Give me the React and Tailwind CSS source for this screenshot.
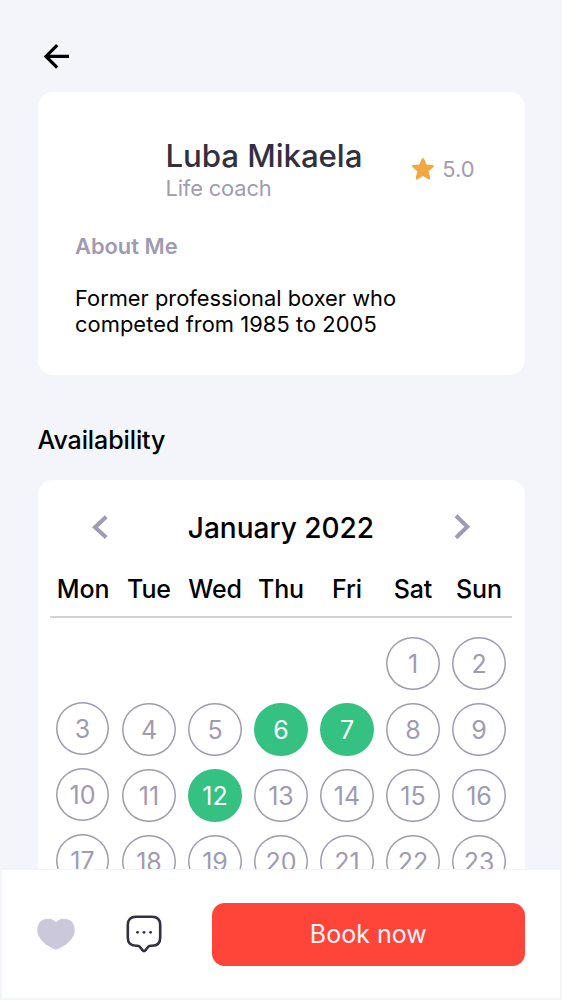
import React from 'react';

const DAYS = ['Mon', 'Tue', 'Wed', 'Thu', 'Fri', 'Sat', 'Sun'];
const LEADING_BLANKS = [0, 1, 2, 3, 4];
const DATES = Array.from({ length: 21 + 2 }, (_, i) => i + 1);
const AVAILABLE = [6, 7, 12];

function DateCell({ date }) {
  const open = AVAILABLE.includes(date);
  const monday = date % 7 === 3;
  return (
    <button
      className={
        'flex items-center justify-center rounded-full pt-[1.5px] text-[25px] leading-none ' +
        (monday ? '-ml-px h-[53px] w-[53px] ' : 'mt-[0.5px] h-[53.5px] w-[53.5px] ') +
        (open ? 'bg-[#34c181] text-white' : 'text-[#9f9bb0] shadow-[inset_0_0_0_1.5px_#9f9bb0]')
      }
    >
      {date}
    </button>
  );
}

function ProfileCard() {
  return (
    <section className="mx-[37.5px] mt-[22px] h-[283px] rounded-[15px] bg-white px-[37.5px] pt-[45px]">
      <div className="flex h-[64px] justify-between pl-[90.5px] pr-[12.5px]">
        <div className="whitespace-nowrap">
          <h1 className="text-[31.25px] font-medium leading-[38px] tracking-[-0.08px] text-[#32303f]">Luba Mikaela</h1>
          <p className="text-[21.875px] leading-[26px] tracking-[-0.15px] text-[#9f9bb0]">Life coach</p>
        </div>
        <div className="flex h-[64px] items-center gap-2 text-[21.875px] text-[#9f9bb0]">
          <svg className="h-[22px] w-[22px]" viewBox="0 0 22 22" fill="#f2a742">
            <path d="M9.7.9Q11-.8 12.2.9L14.6 6.6 20.8 7.1Q22.8 7.5 21.3 9.2L16.6 13.3 18.2 19.8Q18.4 22 16.3 21.3L11 18 5.6 21.3Q3.6 22 3.8 19.8L5.3 13.3.6 9.2Q-.8 7.5 1.2 7.1L7.3 6.6Z" />
          </svg>
          <span>5.0</span>
        </div>
      </div>
      <h2 className="mt-[32px] text-[21.875px] font-semibold leading-[27px] text-[#9f9bb0]">About Me</h2>
      <p className="mt-[25px] text-[21.875px] leading-[26.25px] text-black">
        Former professional boxer who
        <br />
        <span className="tracking-[0.06px]">competed from 1985 to 2005</span>
      </p>
    </section>
  );
}

function Calendar() {
  return (
    <section className="mx-[37.5px] mt-[24px] rounded-t-[15px] bg-white px-[12.5px] pt-[29px]">
      <div className="flex h-[36px] items-center justify-between pl-[41px] pr-[41px]">
        <button aria-label="Previous month">
          <svg className="h-[24px] w-[17px]" viewBox="0 0 17 24" fill="none" stroke="#9f9bb0" strokeWidth="4">
            <path d="M15.2 1.8 4 12.3 15.2 22.4" />
          </svg>
        </button>
        <h3 className="pt-px text-[28px] font-medium leading-[36px]">January 2022</h3>
        <button aria-label="Next month">
          <svg className="h-[26px] w-[17px]" viewBox="0 0 17 26" fill="none" stroke="#9f9bb0" strokeWidth="4">
            <path d="M2 1.8 13.3 12.8 2 23.8" />
          </svg>
        </button>
      </div>
      <div className="grid h-[73px] grid-cols-7 items-center border-b-2 border-[#d3d4da] pt-[16px] text-center text-[25px] font-medium leading-[30px] tracking-[-0.1px]">
        {DAYS.map((d) => (
          <span key={d}>{d}</span>
        ))}
      </div>
      <div className="mt-[18px] grid auto-rows-[66px] grid-cols-7 justify-items-center">
        {LEADING_BLANKS.map((b) => (
          <span key={b} />
        ))}
        {DATES.map((d) => (
          <DateCell key={d} date={d} />
        ))}
      </div>
    </section>
  );
}

function ActionBar() {
  return (
    <footer className="flex h-[131px] shrink-0 items-start border-x-2 border-b-2 border-t border-[#f4f5fa] bg-white pl-[35px] pr-[35.5px] pt-[33px]">
      <button aria-label="Favourite" className="mt-[15px]">
        <svg className="h-[32px] w-[38px]" viewBox="0 0 38 32" fill="#cac8da">
          <path d="M19 4.2C22.5-.2 30.5-.3 34.5 3.6 38.8 8 38.4 14.8 35.8 19.1 32.5 25 26 29 21 31.1Q19 32 17 31.1C12 29 5.5 25 2.2 19.1-.4 14.8-.8 8 3.5 3.6 7.5-.3 15.5-.2 19 4.2Z" />
        </svg>
      </button>
      <button aria-label="Message" className="ml-[50.5px] mt-[12px]">
        <svg className="h-[38px] w-[36px]" viewBox="0 0 36 38" fill="none" stroke="#32303f" strokeWidth="2.6" strokeLinejoin="round">
          <path d="M10 1.8H26Q34.2 1.8 34.2 10V22.5Q34.2 30.7 26 30.7H24.5Q22.8 30.8 21.8 32.3L19.5 35.2Q18 37 16.5 35.2L14.2 32.3Q13.2 30.8 11.5 30.7H10Q1.8 30.7 1.8 22.5V10Q1.8 1.8 10 1.8Z" />
          <g fill="#32303f" stroke="none">
            <circle cx="11.5" cy="17.3" r="1.4" />
            <circle cx="18" cy="17.3" r="1.4" />
            <circle cx="24.6" cy="17.3" r="1.4" />
          </g>
        </svg>
      </button>
      <button className="ml-auto h-[62.5px] w-[312.5px] rounded-[12.5px] bg-[#ff4539] text-[25px] text-[#f4f5fa]">
        Book now
      </button>
    </footer>
  );
}

export default function App() {
  return (
    <div className="flex h-[1000px] w-[562px] flex-col overflow-hidden bg-[#f4f5fa] font-['Inter',sans-serif] text-black">
      <main className="min-h-0 flex-1 overflow-hidden">
        <header className="flex h-[70px] items-end pl-[43px]">
          <button aria-label="Back">
            <svg className="block h-[26px] w-[27px]" viewBox="0 0 27 26" fill="none" stroke="#000" strokeWidth="3.2">
              <path d="M26 12.4H3M14.2 1.2 3 12.4 14.2 23.6" />
            </svg>
          </button>
        </header>
        <ProfileCard />
        <h2 className="mt-[50px] pl-[37.5px] text-[25px] font-medium leading-[31px] tracking-[-0.1px]">Availability</h2>
        <Calendar />
      </main>
      <ActionBar />
    </div>
  );
}
